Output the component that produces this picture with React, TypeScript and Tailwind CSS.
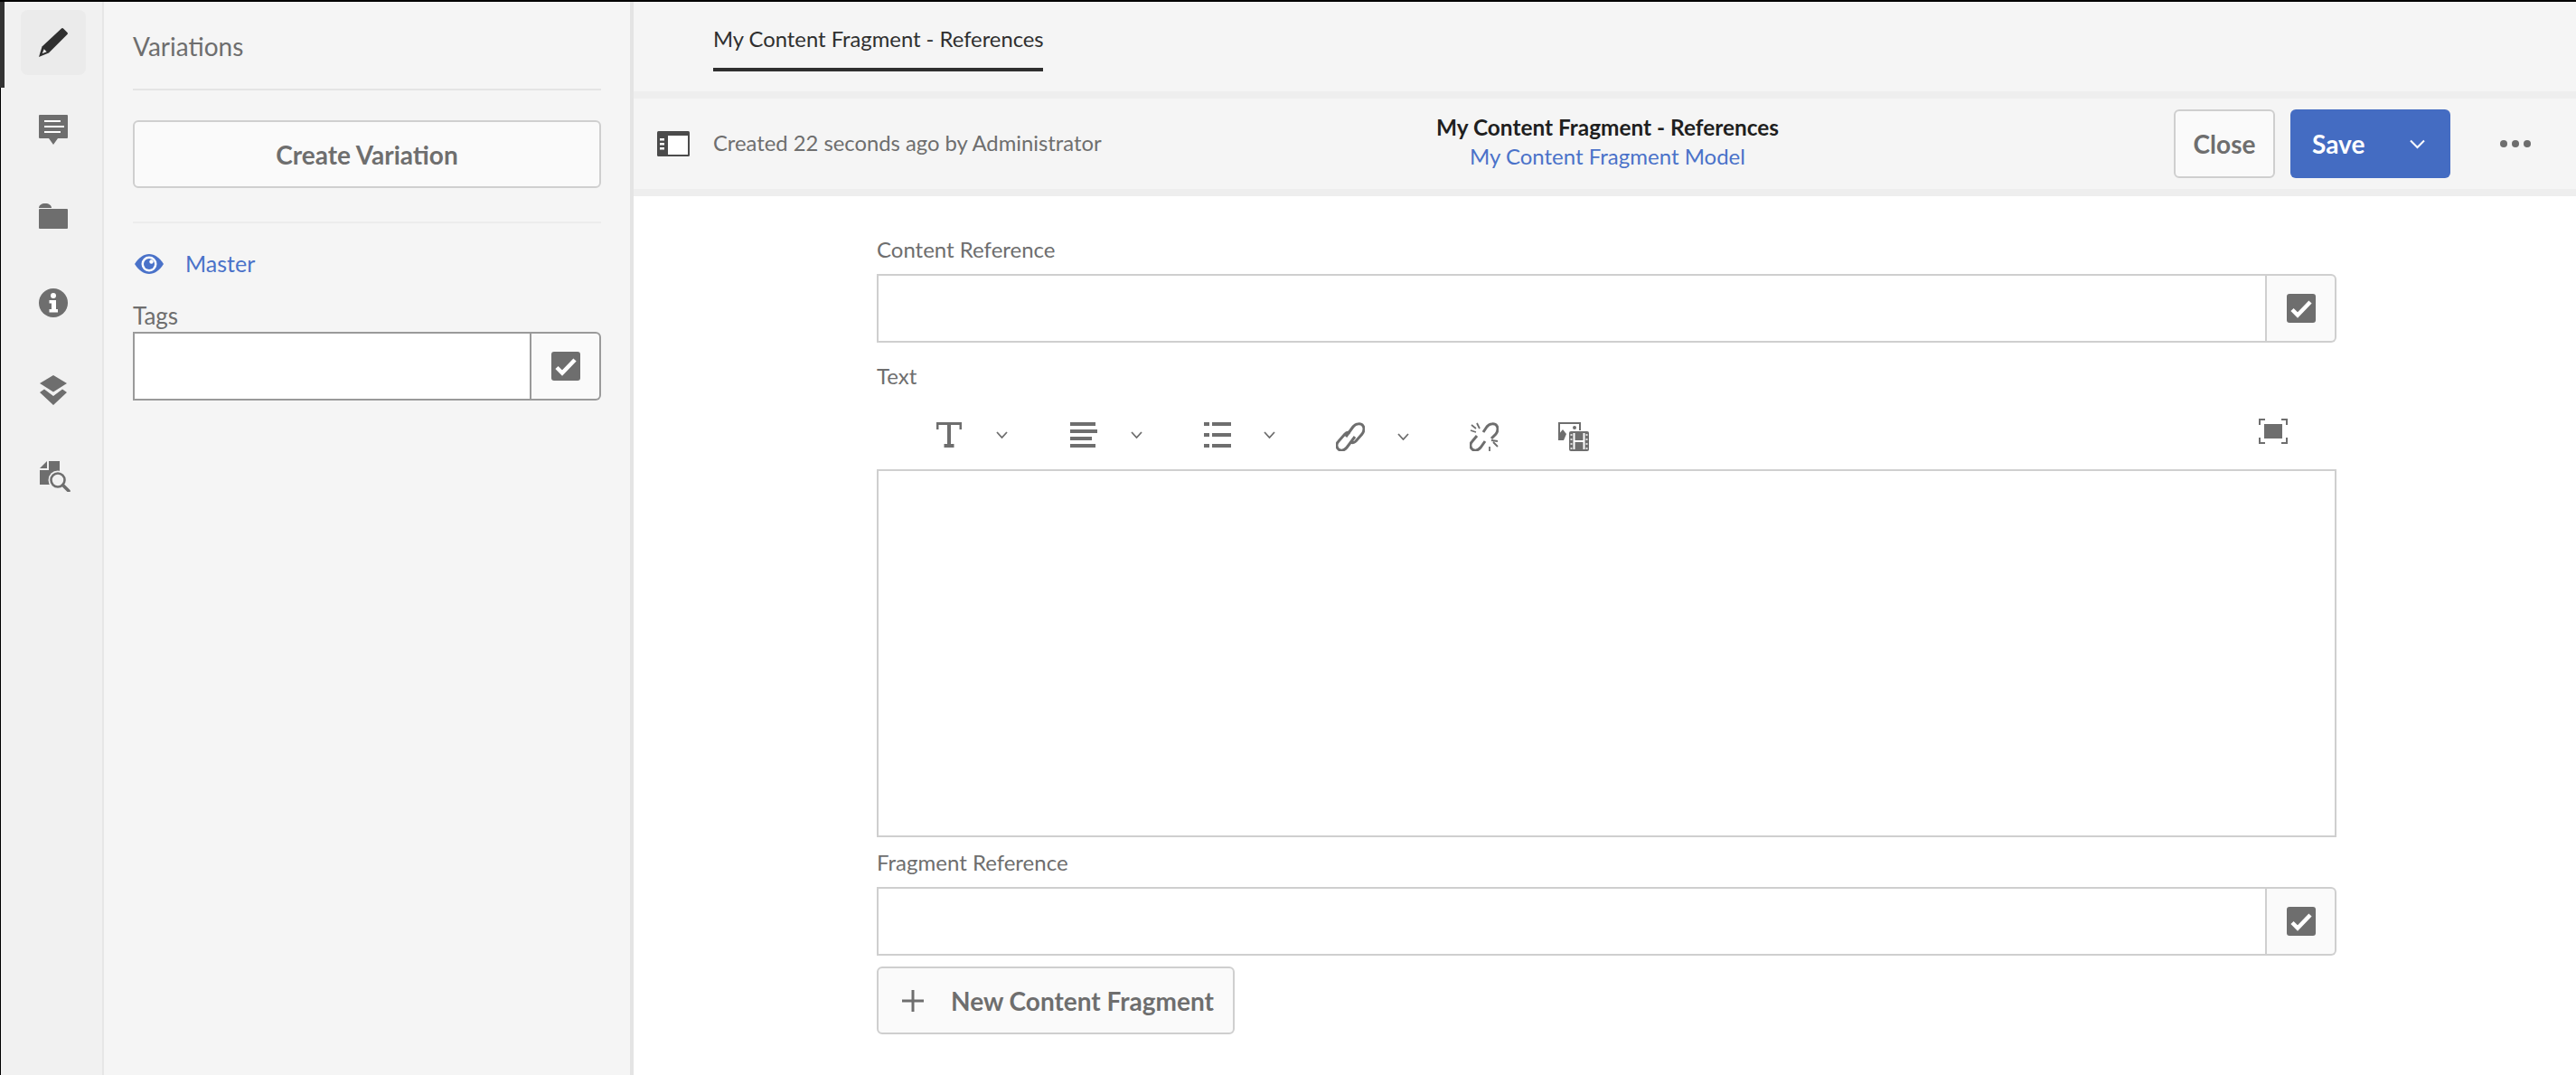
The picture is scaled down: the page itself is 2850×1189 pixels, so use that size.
import React from "react";

function CheckIcon() {
  return (
    <svg width="32" height="32" viewBox="0 0 32 32">
      <rect width="32" height="32" rx="3" fill="#6e6e6e" />
      <path d="M6 17.500l6 6L26 9" fill="none" stroke="#fff" strokeWidth="4.500" />
    </svg>
  );
}

function Chevron() {
  return (
    <svg width="13" height="8" viewBox="0 0 13 8">
      <path d="M1 1l5.500 6L12 1" fill="none" stroke="#6e6e6e" strokeWidth="1.800" />
    </svg>
  );
}

// input with the picker button on its right
function PickerField({ dark }: { dark?: boolean }) {
  const line = dark ? "border-[#9a9a9a]" : "border-[#cfcfcf]";
  return (
    <div className="flex h-[76px]">
      <div className={`flex-1 border-2 bg-white ${line}`} />
      <div
        className={`flex w-[77px] items-center justify-center rounded-r-[6px] border-2 border-l-0 bg-[#fafafa] ${line}`}
      >
        <CheckIcon />
      </div>
    </div>
  );
}

function RailTile({ active, children }: { active?: boolean; children: React.ReactNode }) {
  return (
    <div
      className={`flex h-[72px] w-[72px] items-center justify-center rounded-[8px] ${
        active ? "bg-[#ebebeb]" : ""
      }`}
    >
      {children}
    </div>
  );
}

function Rail() {
  return (
    <div className="relative flex w-[115px] shrink-0 flex-col gap-6 border-r-2 border-l border-r-[#e6e6e6] border-l-black bg-[#f1f1f1] pt-[9px] pl-[22px]">
      <div className="absolute top-0 -left-px h-[95px] w-[5px] bg-[#333333]" />
      {/* edit */}
      <RailTile active>
        <svg width="32" height="32" viewBox="0 0 32 32">
          <path d="M25 .5a1.500 1.500 0 0 1 2 0L31.500 5a1.500 1.500 0 0 1 0 2L11 27.500 0 32l3.500-11.500z" fill="#2f2f2f" />
          <path d="M3.700 28.300l5-2-3-3z" fill="#ebebeb" />
        </svg>
      </RailTile>
      {/* annotations */}
      <RailTile>
        <svg width="32" height="33" viewBox="0 0 32 33">
          <path d="M1 0h30a1 1 0 0 1 1 1v24a1 1 0 0 1-1 1H21l-5 7-5-7H1a1 1 0 0 1-1-1V1a1 1 0 0 1 1-1z" fill="#6e6e6e" />
          <path d="M6 7h18M6 13h22M6 19h18" stroke="#fff" strokeWidth="2" />
        </svg>
      </RailTile>
      {/* folder */}
      <RailTile>
        <svg width="32" height="28" viewBox="0 0 32 28">
          <path d="M0 5C0 2 3 0 7 0s7 2 7 5z" fill="#6e6e6e" />
          <rect y="6" width="32" height="22" rx="1" fill="#6e6e6e" />
        </svg>
      </RailTile>
      {/* info */}
      <RailTile>
        <svg width="32" height="32" viewBox="0 0 32 32">
          <circle cx="16" cy="16" r="16" fill="#6e6e6e" />
          <circle cx="16" cy="8" r="3" fill="#fff" />
          <path d="M11.500 13H19v10h2v3.500H11.500V23H14v-6.500h-2.500z" fill="#fff" />
        </svg>
      </RailTile>
      {/* layers */}
      <RailTile>
        <svg width="30" height="33" viewBox="0 0 30 33">
          <path d="M15 0l15 9-15 9.500L0 9z" fill="#6e6e6e" />
          <path d="M5 15.500L0 19l15 14 15-14-5-3.500-10 7.500z" fill="#6e6e6e" />
        </svg>
      </RailTile>
      {/* references search */}
      <RailTile>
        <svg width="34" height="34" viewBox="0 0 34 34" className="ml-1">
          <path d="M0 8l8-8v8z" fill="#6e6e6e" />
          <path d="M10 0h12v26H0V10h10z" fill="#6e6e6e" />
          <circle cx="20" cy="21" r="10.500" fill="#f1f1f1" />
          <circle cx="20" cy="21" r="7.500" fill="none" stroke="#6e6e6e" strokeWidth="2.600" />
          <path d="M25.500 26.500L32 33" stroke="#6e6e6e" strokeWidth="3.600" strokeLinecap="round" />
        </svg>
      </RailTile>
    </div>
  );
}

function SidePanel() {
  return (
    <div className="w-[586px] shrink-0 border-r-4 border-[#e4e4e4] bg-[#f5f5f5] pr-[32px] pl-[32px] text-[#6e6e6e]">
      <div className="flex h-[98px] items-center border-b-2 border-[#e4e4e4] pt-[2px] text-[28px]">
        Variations
      </div>
      <button className="mt-[33px] block h-[75px] w-full rounded-[6px] border-2 border-[#cfcfcf] bg-[#fafafa] text-[28px] font-bold">
        Create Variation
      </button>
      <div className="mt-[37px] h-[2px] bg-[#ececec]" />
      <div className="mt-[34px] flex h-[21px] items-center gap-[24px] pl-[2px] text-[25px] text-[#4a72c9]">
        <svg width="32" height="22" viewBox="0 0 32 22">
          <path d="M0 11C5 3.500 10 0 16 0s11 3.500 16 11c-5 7.500-10 11-16 11S5 18.500 0 11z" fill="#4a72c9" />
          <circle cx="16" cy="11" r="8.500" fill="#fff" />
          <circle cx="16" cy="11" r="6" fill="#4a72c9" />
          <circle cx="18.500" cy="8.500" r="2.200" fill="#fff" />
        </svg>
        Master
      </div>
      <div className="mt-[31px] h-[32px] text-[26px] leading-[32px]">Tags</div>
      <div className="mt-[2px]">
        <PickerField dark />
      </div>
    </div>
  );
}

function Toolbar() {
  return (
    <div className="grid h-[116px] grid-cols-[1fr_auto_1fr] items-center border-y-8 border-[#eeeeee] bg-[#f5f5f5] pl-[6px]">
      <div className="flex items-center gap-[26px] pl-[20px] text-[23.800px] text-[#6e6e6e]">
        <svg width="36" height="28" viewBox="0 0 36 28">
          <rect width="36" height="28" rx="1.500" fill="#4b4b4b" />
          <rect x="12" y="5" width="22" height="21" fill="#fff" />
          <path d="M3 8h5v2.500H3zM3 13h5v2.500H3zM3 18h5v2.500H3z" fill="#fff" />
        </svg>
        Created 22 seconds ago by Administrator
      </div>
      <div className="-mt-1 text-center text-[24px] leading-[32px]">
        <div className="text-[24.400px] font-bold text-[#1f1f1f]">My Content Fragment - References</div>
        <div className="text-[#4a72c9]">My Content Fragment Model</div>
      </div>
      <div className="flex items-center justify-end pr-[50px]">
        <button className="h-[76px] w-[112px] rounded-[6px] border-2 border-[#cfcfcf] bg-[#fafafa] text-[28px] font-bold text-[#6e6e6e]">
          Close
        </button>
        <button className="ml-[17px] flex h-[76px] w-[177px] items-center rounded-[6px] bg-[#446cc2] pl-[24px] text-[28px] font-bold text-white">
          Save
          <svg width="17" height="11" viewBox="0 0 17 11" className="ml-[50px]">
            <path d="M1 1.500l7.500 7.500L16 1.500" fill="none" stroke="#fff" strokeWidth="2" />
          </svg>
        </button>
        <div className="ml-[55px] flex gap-[5px]">
          <span className="h-[8px] w-[8px] rounded-full bg-[#6e6e6e]" />
          <span className="h-[8px] w-[8px] rounded-full bg-[#6e6e6e]" />
          <span className="h-[8px] w-[8px] rounded-full bg-[#6e6e6e]" />
        </div>
      </div>
    </div>
  );
}

function RteToolbar() {
  return (
    <div className="flex h-[88px] items-start pt-[36px] pr-[54px] pl-[66px]">
      <div className="flex w-[148px] items-center gap-[38px]">
        <svg width="28" height="28" viewBox="0 0 28 28">
          <path d="M0 0h28v8h-2.500V3H16v21h3.500v4h-11v-4H12V3H2.500v5H0z" fill="#6e6e6e" />
        </svg>
        <Chevron />
      </div>
      <div className="flex w-[148px] items-center gap-[37px]">
        <svg width="30" height="28" viewBox="0 0 30 28">
          <path d="M0 0h28v4H0zM0 8h30v4H0zM0 16h24v4H0zM0 24h28v4H0z" fill="#6e6e6e" />
        </svg>
        <Chevron />
      </div>
      <div className="flex w-[146px] items-center gap-[36px]">
        <svg width="30" height="28" viewBox="0 0 30 28">
          <path d="M0 0h6v4H0zM0 12h6v4H0zM0 24h6v4H0zM9 0h21v4H9zM9 12h21v4H9zM9 24h21v4H9z" fill="#6e6e6e" />
        </svg>
        <Chevron />
      </div>
      <div className="flex w-[148px] items-center gap-[36px]">
        <svg width="32" height="32" viewBox="0 0 32 32">
          <path
            d="M11 16l8-11c3-4 9-4 11-1s1 6-1 9l-7 8c-2 2-4 2-6 1M21 16l-9 12c-3 4-8 4-10 1s-1-6 1-8l7-8c2-2 4-2 6-1"
            fill="none"
            stroke="#6e6e6e"
            strokeWidth="3"
          />
        </svg>
        <Chevron />
      </div>
      <div className="w-[98px]">
        <svg width="32" height="32" viewBox="0 0 32 32">
          <path
            d="M15 11l4-6c3-4 9-4 11-1s1 6-1 9l-5 5M17 21l-5 7c-3 4-8 4-10 1s-1-6 1-8l5-6"
            fill="none"
            stroke="#6e6e6e"
            strokeWidth="3"
          />
          <path
            d="M8 1l3 6M1 9l6 2M2 3l5 4M26 22l5 5M24 20l7 1M22 27v5"
            stroke="#6e6e6e"
            strokeWidth="1.800"
          />
        </svg>
      </div>
      <svg width="34" height="32" viewBox="0 0 34 32">
        <path d="M0 0h25v11h-2V2H2v18H0z" fill="#6e6e6e" />
        <path d="M0 20v-6l5-6 4 5-3 7z" fill="#6e6e6e" />
        <circle cx="18" cy="6" r="2" fill="#6e6e6e" />
        <rect x="11" y="9" width="24" height="24" rx="3" fill="#fff" />
        <rect x="12" y="10" width="22" height="22" rx="2" fill="#6e6e6e" />
        <path d="M17.500 12v18M28.500 12v18M18 21h10" stroke="#fff" strokeWidth="2" />
        <path d="M13.500 14h2M13.500 19h2M13.500 24h2M13.500 29h2M30.500 14h2M30.500 19h2M30.500 24h2M30.500 29h2" stroke="#fff" strokeWidth="1.500" />
      </svg>
      {/* fullscreen */}
      <svg width="32" height="28" viewBox="0 0 32 28" className="-mt-1 ml-auto">
        <path d="M7 1H1v6M25 1h6v6M7 27H1v-6M25 27h6v-6" fill="none" stroke="#6e6e6e" strokeWidth="2" />
        <rect x="6" y="6" width="20" height="16" fill="#6e6e6e" />
      </svg>
    </div>
  );
}

export default function App() {
  return (
    <div className="flex h-[1189px] w-[2850px] overflow-hidden border-t-2 border-black bg-white font-['Lato','Liberation_Sans',sans-serif]">
      <Rail />
      <SidePanel />
      <main className="flex min-w-0 flex-1 flex-col">
        {/* tabs */}
        <div className="h-[99px] bg-[#f5f5f5] pl-[88px]">
          <div className="flex h-[77px] w-[365px] items-center whitespace-nowrap border-b-4 border-[#2f2f2f] pt-[11px] text-[23.800px] text-[#2f2f2f]">
            My Content Fragment - References
          </div>
        </div>
        <Toolbar />
        {/* form */}
        <div className="pt-[45px] pr-[265px] pl-[269px] text-[24px] text-[#6e6e6e]">
          <div className="mb-[11px] h-[30px] leading-[28px]">Content Reference</div>
          <PickerField />
          <div className="mt-[22px] h-[30px] leading-[30px]">Text</div>
          <RteToolbar />
          <div className="h-[407px] border-2 border-[#cfcfcf] bg-white" />
          <div className="mt-[14px] mb-[11px] h-[30px] leading-[28px]">Fragment Reference</div>
          <PickerField />
          <button className="mt-[12px] flex h-[75px] w-[396px] items-center rounded-[6px] border-2 border-[#cfcfcf] bg-[#fafafa] pl-[26px] text-[28px] font-bold">
            <svg width="24" height="24" viewBox="0 0 24 24">
              <path d="M12 0v24M0 12h24" stroke="#6e6e6e" strokeWidth="3" />
            </svg>
            <span className="ml-[30px]">New Content Fragment</span>
          </button>
        </div>
      </main>
    </div>
  );
}
